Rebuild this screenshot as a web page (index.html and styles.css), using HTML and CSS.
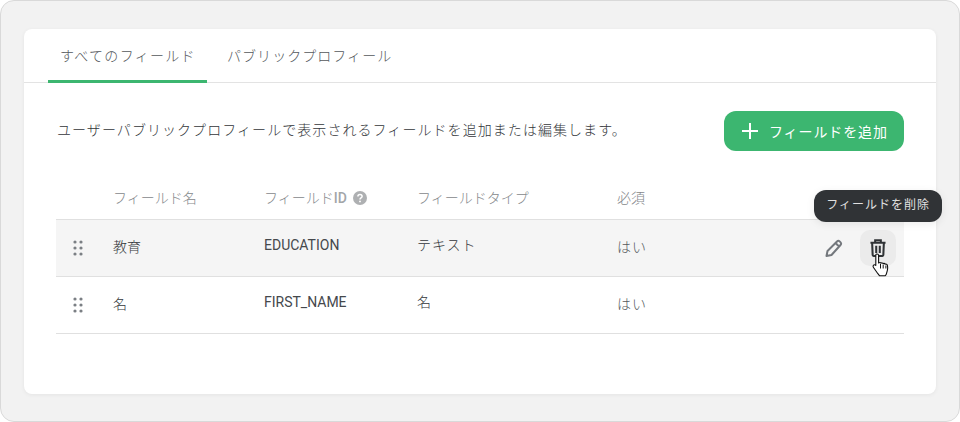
FILE: index.html
```html
<!DOCTYPE html>
<html lang="ja">
<head>
<meta charset="utf-8">
<title>フィールド</title>
<link rel="stylesheet" href="styles.css">
</head>
<body>
<div class="frame">
  <main class="card">
    <nav class="tabs">
      <a class="tab active">すべてのフィールド</a>
      <a class="tab">パブリックプロフィール</a>
    </nav>
    <section class="intro">
      <p class="desc">ユーザーパブリックプロフィールで表示されるフィールドを追加または編集します。</p>
      <button class="add">
        <svg class="plus" width="18" height="18" viewBox="0 0 18 18"><path d="M9 1v16M1 9h16" stroke="#fff" stroke-width="2" fill="none"/></svg>
        <span>フィールドを追加</span>
      </button>
    </section>
    <section class="table">
      <div class="row head">
        <span></span>
        <span>フィールド名</span>
        <span class="idh">フィールド<b>ID</b>
          <svg class="help" width="14" height="14" viewBox="0 0 14 14"><circle cx="7" cy="7" r="7" fill="#aeb0b2"/><path d="M4.900 5.500c0-1.300 1-2 2.100-2s2.100.7 2.100 1.900c0 1.500-2.100 1.600-2.100 3" stroke="#fff" stroke-width="1.500" fill="none"/><circle cx="7" cy="10.400" r=".95" fill="#fff"/></svg>
        </span>
        <span>フィールドタイプ</span>
        <span>必須</span>
        <span></span>
      </div>
      <div class="row body hover">
        <svg class="grip" width="10" height="16" viewBox="0 0 10 16"><g fill="#7b7f84"><circle cx="2" cy="2" r="1.600"/><circle cx="8" cy="2" r="1.600"/><circle cx="2" cy="8" r="1.600"/><circle cx="8" cy="8" r="1.600"/><circle cx="2" cy="14" r="1.600"/><circle cx="8" cy="14" r="1.600"/></g></svg>
        <span class="name">教育</span>
        <span class="up">EDUCATION</span>
        <span class="up jp">テキスト</span>
        <span class="req">はい</span>
        <div class="actions">
          <span class="icon">
            <svg width="20" height="20" viewBox="0 0 20 20"><path d="M2.500 18l1-5L13 3.500c.8-.8 1.900-.8 2.600-.1l1 1c.7.7.7 1.800-.1 2.600L7.500 17z M11.500 5l3.500 3.500" fill="none" stroke="#74787d" stroke-width="2" stroke-linejoin="round"/></svg>
          </span>
          <span class="icon on">
            <svg width="16" height="18" viewBox="0 0 18 20"><path d="M.5 4h17M5.800 4V1.200h6.400V4M2.400 4l.6 14c0 .5.400.9.900.9h10.200c.5 0 .9-.4.900-.9l.6-14M7 7.500v8M11 7.500v8" fill="none" stroke="#303336" stroke-width="2.300"/></svg>
          </span>
          <div class="tip">フィールドを削除</div>
          <svg class="cursor" width="18" height="25" viewBox="0 0 18 25"><path d="M5 1c.9 0 1.600.6 1.600 1.500v7.400l.6-.2c.7-.3 1.500 0 1.800.5.6-.5 1.700-.3 2.100.4.800-.4 1.700-.1 2.100.6.700-.4 1.900 0 2.200 1.100.3 1.500.3 3.800-.1 5.300l-1 3.600c-.1.600-.5 1-1 1.500H7.500c-.5-.6-1-1.300-1.600-2L1.500 14.500c-.7-.9-.5-2 .3-2.500.7-.4 1.500-.2 2 .4V2.500C3.800 1.600 4.100 1 5 1z" fill="#fff" stroke="#111" stroke-width="1.100" stroke-linejoin="round"/><path d="M8.500 11v4.500M11.200 11.500v4M13.900 12.500v3" stroke="#111" stroke-width="1" fill="none"/></svg>
        </div>
      </div>
      <div class="row body">
        <svg class="grip" width="10" height="16" viewBox="0 0 10 16"><g fill="#7b7f84"><circle cx="2" cy="2" r="1.600"/><circle cx="8" cy="2" r="1.600"/><circle cx="2" cy="8" r="1.600"/><circle cx="8" cy="8" r="1.600"/><circle cx="2" cy="14" r="1.600"/><circle cx="8" cy="14" r="1.600"/></g></svg>
        <span class="name">名</span>
        <span class="up">FIRST_NAME</span>
        <span class="up jp">名</span>
        <span class="req">はい</span>
        <div class="actions"></div>
      </div>
    </section>
  </main>
</div>
</body>
</html>
```
FILE: styles.css
```css
* { box-sizing: border-box; }
html, body { margin: 0; padding: 0; background: #fff; }
body {
  width: 960px;
  height: 422px;
  overflow: hidden;
  font-family: Roboto, "Noto Sans CJK JP", sans-serif;
  font-size: 14px;
  font-weight: 300;
  color: #33363a;
}
.frame {
  width: 960px;
  height: 422px;
  padding: 28px 23px 27px;
  background: #f2f2f2;
  border: 1px solid #d9d9d9;
  border-radius: 14px;
}
.card {
  height: 365px;
  background: #fff;
  border-radius: 8px;
  box-shadow: 0 1px 4px rgba(0, 0, 0, .06);
}
.tabs {
  display: flex;
  height: 54px;
  padding-left: 24px;
  border-bottom: 1px solid #e3e3e3;
}
.tab {
  padding: 17px 12px 0 12px;
  width: 159px;
  height: 54px;
  letter-spacing: 1.05px;
  line-height: 20px;
  color: #54585c;
  white-space: nowrap;
}
.tab.active {
  letter-spacing: 1.3px;
  border-bottom: 3px solid #3cb670;
  border-radius: 2px 2px 0 0;
}
.tab + .tab { padding-left: 20px; width: auto; }
.intro {
  display: flex;
  align-items: center;
  justify-content: space-between;
  margin: 28px 32px 0 33px;
}
.desc {
  margin: 0 0 2px;
  letter-spacing: 1.06px;
  line-height: 20px;
  color: #33363a;
}
.add {
  display: flex;
  align-items: center;
  gap: 10px;
  width: 180px;
  height: 40px;
  padding: 0 0 0 17px;
  border: 0;
  border-radius: 12px;
  background: #3cb670;
  color: #fff;
  font: inherit;
  font-weight: 400;
  letter-spacing: .9px;
}
.table { margin: 28px 32px 0; }
.row {
  display: grid;
  grid-template-columns: 57px 151px 153px 200px 1fr 110px;
  align-items: center;
}
.head {
  height: 41px;
  color: #85888b;
  border-bottom: 1px solid #e0e0e0;
  line-height: 20px;
  padding-bottom: 3px;
}
.head b { font-weight: 500; color: #a3a6a9; }
.idh { display: flex; align-items: center; white-space: nowrap; }
.help { margin-left: 6px; }
.body {
  height: 57px;
  border-bottom: 1px solid #e0e0e0;
  line-height: 20px;
}
.body.hover { background: #f5f5f5; }
.grip { margin-left: 17px; }
.name { color: #33363a; margin-bottom: 2px; }
.up { margin-bottom: 6px; font-weight: 400; color: #45484c; }
.up.jp { font-weight: 300; letter-spacing: 1px; color: #33363a; }
.req { color: #54585c; letter-spacing: 1px; margin-bottom: 2px; }
.actions {
  position: relative;
  display: flex;
  justify-content: flex-end;
  align-items: center;
  padding-right: 8px;
  height: 36px;
  margin-bottom: 1px;
}
.icon {
  display: flex;
  flex: none;
  width: 36px;
  height: 36px;
  margin-left: 8px;
  align-items: center;
  justify-content: center;
  border-radius: 10px;
}
.icon.on { background: #ebebeb; }
.tip {
  position: absolute;
  right: -38px;
  top: -40px;
  height: 32px;
  padding: 0 12px;
  border-radius: 12px;
  background: #303336;
  color: #e0e0e0;
  font-size: 12px;
  font-weight: 400;
  line-height: 31px;
  letter-spacing: 1px;
  white-space: nowrap;
  box-shadow: 0 2px 8px rgba(0, 0, 0, .08);
}
.cursor {
  position: absolute;
  left: 78px;
  top: 23px;
}
```
